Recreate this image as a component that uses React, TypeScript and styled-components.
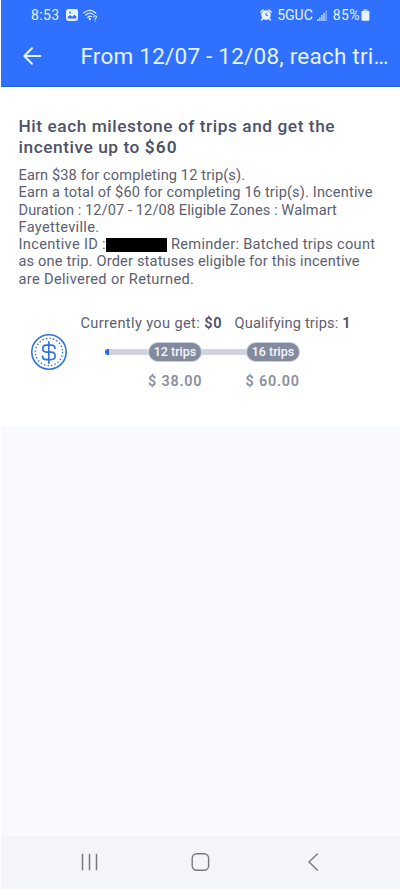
import React from "react";
import styled, { createGlobalStyle } from "styled-components";

const GlobalStyle = createGlobalStyle`
  * { box-sizing: border-box; }
  body { margin: 0; background: #fff; }
`;

const Screen = styled.div`
  width: 400px;
  height: 890px;
  padding: 0 0 1px 1px;
  display: flex;
  flex-direction: column;
  background: #fff;
  color: #5c6070;
  font-family: Roboto, "Liberation Sans", sans-serif;
  overflow: hidden;
`;

const Header = styled.header`
  height: 87px;
  flex: none;
  background: #2f71fe;
  border-bottom: 1px solid #2461df;
  color: #e6f3ff;
`;

const StatusBar = styled.div`
  height: 30px;
  display: flex;
  align-items: center;
  justify-content: space-between;
  padding: 0 30px;
`;

const StatusGroup = styled.div`
  display: flex;
  align-items: center;
`;

const Spacer = styled.span<{ $width: number }>`
  width: ${(p) => p.$width}px;
`;

const TitleBar = styled.div`
  height: 52px;
  display: flex;
  align-items: center;
  padding-left: 20px;
`;

const BackButton = styled.button`
  display: flex;
  width: 24px;
  height: 24px;
  margin-right: 35.5px;
  padding: 0;
  border: 0;
  background: none;
  color: inherit;
`;

interface TextProps {
  $spacing?: number;
  $gap?: number;
}

const StatusText = styled.span<TextProps>`
  white-space: pre;
  font-size: 14px;
  line-height: 16px;
  letter-spacing: ${(p) => p.$spacing ?? 0}px;
  margin-left: ${(p) => p.$gap ?? 0}px;
`;

const Title = styled.h1`
  margin: 0;
  white-space: pre;
  font-size: 22.5px;
  font-weight: 400;
  line-height: 28px;
  letter-spacing: 0.22px;
`;

const Card = styled.main`
  height: 339px;
  flex: none;
  padding: 29px 17px 0 17.5px;
  background: #fff;
`;

const Heading = styled.h2`
  margin: 0 0 10px;
  font-size: 17.3px;
  font-weight: 500;
  line-height: 20.6px;
  color: #4d5269;
`;

const HeadingLine = styled.span<TextProps>`
  display: block;
  white-space: pre;
  letter-spacing: ${(p) => p.$spacing ?? 0}px;
`;

const Strong = styled.strong<TextProps>`
  font-weight: 600;
  color: #4a4f68;
  letter-spacing: ${(p) => p.$spacing ?? 0}px;
`;

const Details = styled.p`
  margin: 0;
  font-size: 14.6px;
  line-height: 17.25px;
`;

const DetailLine = styled.span<TextProps>`
  display: flex;
  align-items: center;
  height: 17.25px;
  white-space: pre;
  letter-spacing: ${(p) => p.$spacing ?? 0}px;
`;

const Run = styled.span<TextProps>`
  letter-spacing: ${(p) => p.$spacing ?? 0}px;
`;

const Redacted = styled.span`
  width: 61px;
  height: 14px;
  margin: 0 4px 0 0;
  background: #000;
`;

const Summary = styled.div`
  display: flex;
  margin: 27px 0 0 62px;
  font-size: 14.6px;
  line-height: 17px;
  white-space: pre;
`;

const SummaryItem = styled.span`
  margin-right: 12px;
`;

const ProgressRow = styled.div`
  display: flex;
  align-items: flex-start;
  margin: 1px 0 0 11.5px;
`;

const Progress = styled.div`
  width: 195px;
  margin: 8.5px 0 0 37px;
`;

const Track = styled.div`
  display: flex;
  align-items: center;
  height: 21px;
`;

const Segment = styled.div<{ $width: number; $first?: boolean }>`
  width: ${(p) => p.$width}px;
  height: 6px;
  border-radius: ${(p) => (p.$first ? "3px 0 0 3px" : 0)};
  background: ${(p) =>
    p.$first ? "linear-gradient(90deg, #2b6ddb 4px, #d1d4de 4px)" : "#d1d4de"};
`;

const Pill = styled.span`
  flex: none;
  width: 54px;
  height: 20px;
  border: 1px solid #c6cddc;
  border-radius: 10px;
  background: #858b9f;
  color: #f3f6fc;
  font-size: 12.5px;
  font-weight: 500;
  line-height: 18px;
  text-align: center;
  white-space: pre;
`;

const Amounts = styled.div`
  display: flex;
  gap: 43px;
  margin: 11px 0 0 43px;
`;

const Amount = styled.span`
  width: 55px;
  font-size: 14.4px;
  font-weight: 600;
  line-height: 17px;
  letter-spacing: 0.8px;
  white-space: pre;
  color: #8b909d;
`;

const Empty = styled.div`
  flex: 1;
  background: #f9fafd;
`;

const NavBar = styled.nav`
  height: 53px;
  flex: none;
  display: flex;
  justify-content: space-between;
  align-items: center;
  padding: 0 75px 2px 76px;
  background: #f4f5f8;
  color: #77797d;
`;

const NavIcon = styled.svg`
  display: block;
  width: 24px;
  height: 24px;
`;

const PictureIcon = () => (
  <svg width="12" height="12" viewBox="0 0 12 12">
    <rect width="12" height="12" rx="2.4" fill="#e6f3ff" />
    <path d="M1.7 9.5V8l2.4-2 2 1.8 2.3-2 2 1.7v2z" fill="#2f71fe" />
    <circle cx="4.1" cy="3.4" r="1" fill="#2f71fe" />
  </svg>
);

const WifiIcon = () => (
  <svg width="15" height="13" viewBox="0 0 15 13" fill="none" stroke="#e6f3ff" strokeWidth="1.1" strokeLinecap="round">
    <path d="M.8 4Q6.8 -1.4 12.8 4M2.6 6.2Q6.8 2.4 10.6 5.6M4.6 8.3Q6.8 6.3 8.6 7.6" />
    <circle cx="6.7" cy="10" r=".6" fill="#e6f3ff" />
    <path d="M10.7 8c.1-1.7 3-1.5 2.8.1-.1 1-1.4 1-1.4 2M12.1 12v.1" />
  </svg>
);

const AlarmIcon = () => (
  <svg width="12" height="12" viewBox="0 0 12 12">
    <path d="M.8 3 3 1M11.2 3 9 1M2.6 9.7 1.5 11M9.4 9.7l1.1 1.3" stroke="#e6f3ff" strokeWidth="1.5" strokeLinecap="round" />
    <circle cx="6" cy="6.1" r="4.8" fill="#e6f3ff" />
    <path d="M6 3.6v2.7h2" fill="none" stroke="#2f71fe" strokeWidth="1" />
  </svg>
);

const SignalIcon = () => (
  <svg width="10" height="11" viewBox="0 0 10 11" stroke="#c5dcff" strokeWidth="1.4">
    <path d="M.8 11V9M2.8 11V7.2M4.9 11V5M7 11V2.8" />
    <path d="M9.1 11V.5" opacity=".6" />
  </svg>
);

const BatteryIcon = () => (
  <svg width="9" height="12" viewBox="0 0 9 12" fill="#e6f3ff">
    <rect x="2.4" width="4" height="2" rx=".7" opacity=".5" />
    <rect x=".4" y="1.8" width="8" height="10" rx="1.3" />
  </svg>
);

const CoinIcon = () => (
  <svg width="38" height="38" viewBox="0 0 38 38" fill="none" stroke="#3474d4">
    <circle cx="19" cy="19" r="17.2" strokeWidth="1.6" />
    <circle cx="19" cy="19" r="13.6" strokeWidth="1.4" strokeDasharray="1.4 2.16" />
    <path
      d="M18.8 8.9v21.4M25 15.4c-.1-2-1.6-3.3-3.7-3.3h-5c-2.1 0-3.6 1.5-3.6 3.5s1.5 3.5 3.6 3.5h5.1c2.2 0 3.7 1.5 3.7 3.7s-1.5 3.8-3.7 3.8h-5c-2.2 0-3.8-1.4-3.9-3.5"
      strokeWidth="1.7"
      strokeLinecap="round"
    />
  </svg>
);

export default function App() {
  return (
    <>
      <GlobalStyle />
      <Screen>
        <Header>
          <StatusBar>
            <StatusGroup>
              <StatusText $spacing={0.4}>8:53</StatusText>
              <Spacer $width={6} />
              <PictureIcon />
              <Spacer $width={5} />
              <WifiIcon />
            </StatusGroup>
            <StatusGroup>
              <AlarmIcon />
              <StatusText $gap={5}>5GUC</StatusText>
              <Spacer $width={4} />
              <SignalIcon />
              <StatusText $gap={6} $spacing={0.4}>85%</StatusText>
              <Spacer $width={1} />
              <BatteryIcon />
            </StatusGroup>
          </StatusBar>
          <TitleBar>
            <BackButton aria-label="Back">
              <svg width="24" height="24" viewBox="0 0 24 24" fill="none" stroke="currentColor" strokeWidth="2" strokeLinecap="round" strokeLinejoin="round">
                <path d="M19.3 12H3.5M11 4.2 3.3 12l7.7 7.8" />
              </svg>
            </BackButton>
            <Title>From 12/07 - 12/08, reach tri…</Title>
          </TitleBar>
        </Header>

        <Card>
          <Heading>
            <HeadingLine $spacing={0.56}>Hit each milestone of trips and get the</HeadingLine>
            <HeadingLine $spacing={0.56}>
              incentive up to <Strong $spacing={1.1}>$60</Strong>
            </HeadingLine>
          </Heading>
          <Details>
            <DetailLine $spacing={0.12}>Earn $38 for completing 12 trip(s).</DetailLine>
            <DetailLine $spacing={0.145}>Earn a total of $60 for completing 16 trip(s). Incentive</DetailLine>
            <DetailLine $spacing={0.08}>Duration : 12/07 - 12/08 Eligible Zones : Walmart</DetailLine>
            <DetailLine $spacing={0.33}>Fayetteville.</DetailLine>
            <DetailLine>
              <Run $spacing={0.33}>Incentive ID :</Run>
              <Redacted />
              <Run $spacing={0.3}>Reminder: Batched trips count</Run>
            </DetailLine>
            <DetailLine $spacing={0.17}>as one trip. Order statuses eligible for this incentive</DetailLine>
            <DetailLine $spacing={0.34}>are Delivered or Returned.</DetailLine>
          </Details>

          <Summary>
            <SummaryItem>
              <Run $spacing={0.37}>Currently you get: </Run>
              <Strong $spacing={0.9}>$0</Strong>
            </SummaryItem>
            <SummaryItem>
              <Run $spacing={0.16}>Qualifying trips: </Run>
              <Strong>1</Strong>
            </SummaryItem>
          </Summary>

          <ProgressRow>
            <CoinIcon />
            <Progress>
              <Track>
                <Segment $width={43} $first />
                <Pill>12 trips</Pill>
                <Segment $width={44} />
                <Pill>16 trips</Pill>
              </Track>
              <Amounts>
                <Amount>$ 38.00</Amount>
                <Amount>$ 60.00</Amount>
              </Amounts>
            </Progress>
          </ProgressRow>
        </Card>

        <Empty />

        <NavBar>
          <NavIcon viewBox="0 0 24 24" fill="none" stroke="currentColor" strokeWidth="1.5">
            <path d="M5.5 3.7v16.6M12.5 3.7v16.6M19.5 3.7v16.6" />
          </NavIcon>
          <NavIcon viewBox="0 0 24 24" fill="none" stroke="currentColor" strokeWidth="1.4">
            <rect x="3.2" y="3.7" width="16.4" height="16.6" rx="4.5" />
          </NavIcon>
          <NavIcon viewBox="0 0 24 24" fill="none" stroke="currentColor" strokeWidth="1.4">
            <path d="M16.8 3.5 8 12l8.8 8.5" />
          </NavIcon>
        </NavBar>
      </Screen>
    </>
  );
}
